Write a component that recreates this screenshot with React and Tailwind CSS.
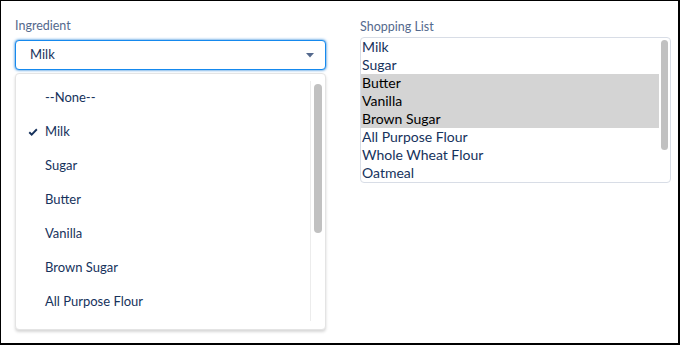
import { useState } from "react";

const options = [
  "--None--",
  "Milk",
  "Sugar",
  "Butter",
  "Vanilla",
  "Brown Sugar",
  "All Purpose Flour",
];

const shopping = [
  "Milk",
  "Sugar",
  "Butter",
  "Vanilla",
  "Brown Sugar",
  "All Purpose Flour",
  "Whole Wheat Flour",
  "Oatmeal",
];

function Check() {
  return (
    <svg width="10" height="9" viewBox="0 0 10 9" className="text-[#16325c]">
      <path
        d="M0.6 4.9 L1.9 3.6 L3.7 5.3 L8.2 0.6 L9.5 1.9 L3.7 7.9 Z"
        fill="currentColor"
      />
    </svg>
  );
}

function Caret() {
  return (
    <svg width="8" height="5" viewBox="0 0 8 5">
      <path d="M0 0 H8 L4 4.6 Z" fill="#54698d" />
    </svg>
  );
}

function Combobox({ value }) {
  return (
    <div className="flex flex-col">
      <label className="text-[12.5px] leading-[18px] text-[#54698d] mb-[5px]">
        Ingredient
      </label>
      <div className="h-[30px] flex items-center border border-[#1589ee] rounded-[4px] shadow-[0_0_3px_#0070d2] pl-[14px] pr-[11px] bg-white">
        <span className="flex-1 text-[13px] text-[#16325c]">{value}</span>
        <Caret />
      </div>
      <div className="mt-[3px] h-[257px] border border-[#e4e4e4] rounded-[4px] bg-white shadow-[0_2px_3px_rgba(0,0,0,0.16)] py-[7px] flex">
        <div className="flex-1 h-[240px] overflow-hidden">
          {options.map((o) => (
            <div key={o} className="h-[34px] flex items-center pl-3">
              <span className="w-[17px] flex items-center">
                {o === value ? <Check /> : null}
              </span>
              <span className="text-[13px] text-[#16325c]">{o}</span>
            </div>
          ))}
        </div>
        <div className="w-[15px] h-[240px] border-l border-[#ececec] pt-[3px] flex justify-center">
          <div className="w-[8px] h-[149px] rounded-full bg-[#c1c1c1]" />
        </div>
      </div>
    </div>
  );
}

function Listbox({ selected }) {
  return (
    <div className="flex flex-col">
      <label className="text-[12.5px] leading-[18px] text-[#54698d] mt-[1px] mb-[1px]">
        Shopping List
      </label>
      <div className="h-[146px] border border-[#d8dde6] rounded-[4px] bg-white flex overflow-hidden">
        <div className="flex-1">
          {shopping.map((s) => (
            <div
              key={s}
              className={
                "h-[18px] leading-[18px] pl-[1px] text-[14px] " +
                (selected.includes(s)
                  ? "bg-[#d4d4d4] text-black"
                  : "text-[#16325c]")
              }
            >
              {s}
            </div>
          ))}
        </div>
        <div className="w-[11px] pt-[2px] flex justify-center">
          <div className="w-[7px] h-[110px] rounded-full bg-[#c1c1c1]" />
        </div>
      </div>
    </div>
  );
}

export default function App() {
  const [value] = useState("Milk");
  const [selected] = useState(["Butter", "Vanilla", "Brown Sugar"]);

  return (
    <div
      className="w-[680px] h-[345px] bg-white border-l border-t border-r-2 border-b-2 border-black flex gap-[34px] pl-[14px] pr-[7px] pt-[16px]"
      style={{ fontFamily: "Lato, 'Noto Sans', sans-serif" }}
    >
      <div className="w-[311px]">
        <Combobox value={value} />
      </div>
      <div className="w-[311px]">
        <Listbox selected={selected} />
      </div>
    </div>
  );
}
